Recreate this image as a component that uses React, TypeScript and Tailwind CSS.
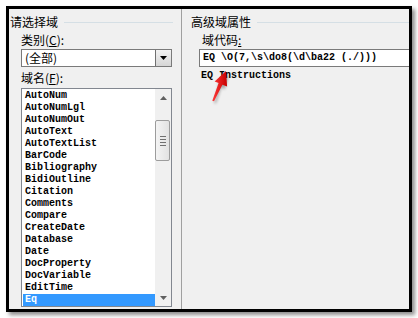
import React from 'react'

const fieldNames = [
    'AutoNum',
    'AutoNumLgl',
    'AutoNumOut',
    'AutoText',
    'AutoTextList',
    'BarCode',
    'Bibliography',
    'BidiOutline',
    'Citation',
    'Comments',
    'Compare',
    'CreateDate',
    'Database',
    'Date',
    'DocProperty',
    'DocVariable',
    'EditTime',
    'Eq',
]

const cjk = "font-['Noto_Sans_CJK_SC','Liberation_Sans',sans-serif]"
const mono = "font-['Liberation_Mono','Noto_Sans_CJK_SC',monospace] font-bold"

function GroupTitle({ text, lineClass }: { text: string; lineClass: string }) {
    return (
        <div className="flex items-center gap-[6px]">
            <span className={`${cjk} text-[12px] leading-[12px] text-black`}>{text}</span>
            <div className={`h-px bg-[#d5dfe5] ${lineClass}`} />
        </div>
    )
}

function Scrollbar() {
    return (
        <div className="flex h-full w-[16px] flex-col bg-[#f0f0f0]">
            <div className="flex h-[17px] items-center justify-center">
                <svg width="7" height="4" viewBox="0 0 7 4">
                    <path d="M0 4 L3.5 0 L7 4 Z" fill="#606060" />
                </svg>
            </div>
            <div className="flex flex-1 flex-col pt-[14px]">
                <div className="flex h-[41px] w-[15px] flex-col items-center justify-center gap-[2px] rounded-[2px] border border-[#9c9c9c] bg-[linear-gradient(to_right,#f4f4f4,#e2e2e2)]">
                    <div className="h-px w-[6px] bg-[#707070]" />
                    <div className="h-px w-[6px] bg-[#707070]" />
                    <div className="h-px w-[6px] bg-[#707070]" />
                    <div className="h-px w-[6px] bg-[#707070]" />
                </div>
            </div>
            <div className="flex h-[17px] items-center justify-center">
                <svg width="7" height="4" viewBox="0 0 7 4">
                    <path d="M0 0 L3.5 4 L7 0 Z" fill="#606060" />
                </svg>
            </div>
        </div>
    )
}

function RedArrow() {
    return (
        <svg className="pointer-events-none absolute left-0 top-0" width="418" height="318" viewBox="0 0 418 318">
            <defs>
                <filter id="blur" x="-50%" y="-50%" width="200%" height="200%">
                    <feGaussianBlur stdDeviation="1.6" />
                </filter>
                <linearGradient id="red" x1="0" y1="0" x2="1" y2="0">
                    <stop offset="0" stopColor="#ff3a3a" />
                    <stop offset="1" stopColor="#c80000" />
                </linearGradient>
            </defs>
            <path
                d="M229 74 L217.6 84.6 L221.6 86.1 L215.8 103.5 L214.2 103 L219 84.8 L224.6 89.4 Z"
                fill="#000"
                opacity="0.35"
                filter="url(#blur)"
            />
            <path d="M226 71 L214.6 81.6 L218.6 83.1 L212.3 100.7 L214 101.3 L222.4 84.7 L227.1 86.4 Z" fill="url(#red)" />
        </svg>
    )
}

export default function App() {
    return (
        <div className="relative h-[318px] w-[418px] bg-white pl-[6px] pt-[6px]">
            <div className="flex h-[306px] w-[406px] overflow-hidden border-[3px] border-black bg-[#f0f0f0] shadow-[3px_3px_4px_rgba(0,0,0,0.45)]">
                {/* left: field list */}
                <div className="flex w-[172px] shrink-0 flex-col pl-px pt-[7px]">
                    <GroupTitle text="请选择域" lineClass="w-[109px]" />
                    <div className={`${cjk} mt-[6px] pl-[11px] text-[12px] leading-[12px] text-black`}>
                        类别(<span className="underline underline-offset-1">C</span>):
                    </div>
                    <div className="ml-[11px] mt-[3px] flex h-[18px] w-[151px] border border-[#7a7a7a] bg-white">
                        <div className={`${cjk} flex flex-1 items-center pl-[3px] text-[12px] leading-[12px] text-black`}>(全部)</div>
                        <div className="flex w-[16px] items-center justify-center border-l border-[#707070] bg-[linear-gradient(#f2f2f2,#d6d6d6)]">
                            <svg width="7" height="4" viewBox="0 0 7 4">
                                <path d="M0 0 L3.5 4 L7 0 Z" fill="#000" />
                            </svg>
                        </div>
                    </div>
                    <div className={`${cjk} mt-[5px] pl-[11px] text-[12px] leading-[12px] text-black`}>
                        域名(<span className="underline underline-offset-1">F</span>):
                    </div>
                    <div className="ml-[11px] mt-[4px] flex h-[219px] w-[151px] border border-[#828790] bg-white">
                        <div className="flex flex-1 flex-col pl-px pt-px">
                            {fieldNames.map((name) => (
                                <div
                                    key={name}
                                    className={`${mono} h-[12px] pl-[2px] text-[10px] leading-[12px] ${
                                        name === 'Eq' ? 'bg-[#3399ff] text-white' : 'text-black'
                                    }`}
                                >
                                    {name}
                                </div>
                            ))}
                        </div>
                        <Scrollbar />
                    </div>
                </div>

                <div className="w-px shrink-0 bg-[#a0a0a0]" />

                {/* right: advanced properties */}
                <div className="flex flex-1 flex-col pl-[9px] pt-[7px]">
                    <GroupTitle text="高级域属性" lineClass="flex-1" />
                    <div className={`${cjk} mt-[6px] pl-[11px] text-[12px] leading-[12px] text-black`}>
                        域代码<span className="underline underline-offset-1">:</span>
                    </div>
                    <div className="ml-[8px] mt-[3px] flex h-[18px] w-[230px] items-center border border-[#7a7a7a] bg-white pl-[3px]">
                        <span className={`${mono} whitespace-pre text-[10px] leading-[12px] text-black`}>{'EQ \\O(7,\\s\\do8(\\d\\ba22 (./)))'}</span>
                    </div>
                    <div className={`${mono} mt-[3px] whitespace-pre pl-[10px] text-[10px] leading-[12px] text-black`}>EQ Instructions</div>
                </div>
            </div>
            <RedArrow />
        </div>
    )
}
